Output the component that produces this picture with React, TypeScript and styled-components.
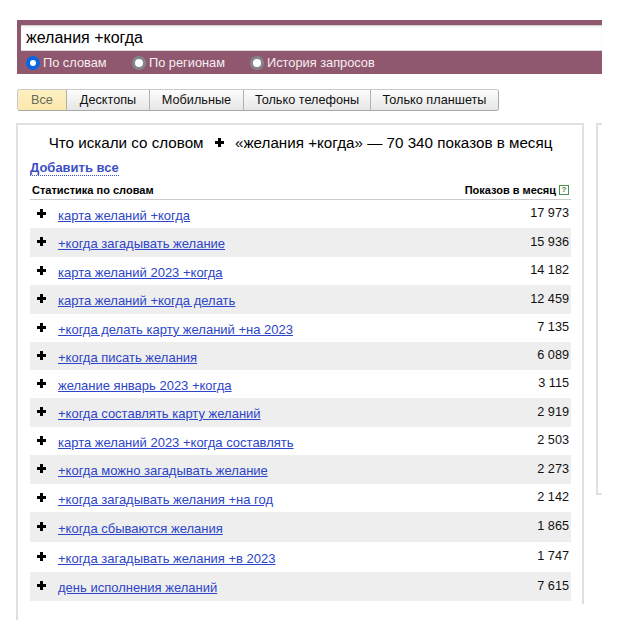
import React from "react";
import styled, { createGlobalStyle } from "styled-components";

const Global = createGlobalStyle`
  html, body { margin: 0; padding: 0; background: #fff; }
  body { font-family: "Liberation Sans", Arial, sans-serif; color: #000; overflow: hidden; }
`;
const Page = styled.div`
  width: 620px; height: 620px; overflow: hidden;
  padding: 20px 18px 0 17px; box-sizing: border-box;
`;
const SearchBand = styled.div`
  background: #90586e; padding-top: 5px; height: 54px; box-sizing: border-box;
`;
const SearchInput = styled.div`
  background: #fff; height: 26px; margin-left: 4px; padding-left: 5px; padding-top: 0;
  font-size: 16px; line-height: 25px;
  box-shadow: inset 0 2px 2px -1px #c4c4c4, inset 0 -1px 0 #d8d8d8;
`;
const RadioRow = styled.div`
  display: flex; height: 23px; align-items: center; padding-left: 9px;
  color: #f6eef1; font-size: 12.8px;
`;
const RadioItem = styled.label<{ $w: number }>`
  display: flex; align-items: center; gap: 3px; width: ${p => p.$w}px;
`;
const RadioDot = styled.span<{ $on?: boolean }>`
  width: 14px; height: 14px; border-radius: 50%; box-sizing: border-box; background: #fff;
  border: ${p => (p.$on ? "4px solid #0a66e0" : "3px solid #85858c")};
`;
const Tabs = styled.div`
  display: inline-flex; margin-top: 15px; height: 22px; box-sizing: border-box;
  border: 1px solid #c9c9c9; border-bottom-color: #a8a8a8; border-right-color: #a8a8a8; border-radius: 3px; overflow: hidden;
  vertical-align: top;
`;
const Tab = styled.div<{ $w: number; $on?: boolean }>`
  width: ${p => p.$w}px; box-sizing: border-box; text-align: center; font-size: 12.7px; line-height: 20px;
  color: ${p => (p.$on ? "#6a6a5a" : "#111")};
  background: ${p => (p.$on ? "linear-gradient(#fdf0c0, #fbe8ae)" : "linear-gradient(#fdfdfd, #e6e6e6)")};
  & + & { border-left: 1px solid #b0b0b0; }
`;
const Columns = styled.div`
  display: flex; margin-top: 12px; margin-left: -1px; align-items: flex-start; gap: 12px;
`;
const Panel = styled.div`
  width: 568px; height: 497px; flex: none; box-sizing: border-box;
  border-left: 2px solid #e0e0e0;
`;
const PanelBody = styled.div`
  height: 481px; box-sizing: border-box;
  border: solid #e0e0e0; border-width: 2px 2px 0 0; padding: 0 11px 0 12px;
`;
const SidePanel = styled.div`
  flex: 1; height: 372px; box-sizing: border-box;
  border: solid #e0e0e0; border-width: 2px 0 2px 2px;
`;
const Heading = styled.div`
  display: flex; justify-content: center; align-items: center; gap: 6px;
  font-size: 15.2px; height: 32px; padding-top: 3px; box-sizing: border-box; white-space: pre;
`;
const AddAll = styled.a`
  display: inline-block; font-size: 13px; font-weight: bold; color: #3d4fc4; line-height: 15px;
  border-bottom: 1px dotted #3d4fc4; margin-top: 3px;
`;
const TableHead = styled.div`
  display: flex; justify-content: space-between; align-items: flex-end; height: 24px; padding: 0 2px 3px;
  border-bottom: 1px solid #ccc; font-size: 11px; font-weight: bold; box-sizing: border-box;
`;
const HeadRight = styled.span`
  display: flex; align-items: center; gap: 3px;
`;
const Help = styled.span`
  width: 8px; height: 8px; flex: none; border: 1px solid #4d8f4d; color: #3f7f3f; font-size: 8px; line-height: 8px; text-align: center;
`;
const Row = styled.div<{ $h: number; $alt?: boolean }>`
  display: flex; height: ${p => p.$h}px; box-sizing: border-box; align-items: center;
  padding: 0 2px 0 6px; background: ${p => (p.$alt ? "#eeeeee" : "#fff")};
`;
const PlusBox = styled.span`
  display: inline-flex; width: 12px; height: 13px; flex: none; margin-top: 0;
`;
const Phrase = styled.a`
  margin-left: 10px; font-size: 13px; color: #2d45c8; text-decoration: underline; flex: 1; padding-top: 2px;
`;
const Count = styled.span`
  font-size: 12.7px; margin-top: -2px; color: #111;
`;

const Plus = ({ size = 11 }: { size?: number }) => (
  <svg width={size} height={size} viewBox="0 0 11 11" aria-hidden>
    <path d="M4 1h3v3h3v3H7v3H4V7H1V4h3z" fill="#000" />
  </svg>
);

const rows: [string, string, number][] = [
  ["карта желаний +когда", "17 973", 28],
  ["+когда загадывать желание", "15 936", 29],
  ["карта желаний 2023 +когда", "14 182", 28],
  ["карта желаний +когда делать", "12 459", 29],
  ["+когда делать карту желаний +на 2023", "7 135", 28],
  ["+когда писать желания", "6 089", 28],
  ["желание январь 2023 +когда", "3 115", 28],
  ["+когда составлять карту желаний", "2 919", 29],
  ["карта желаний 2023 +когда составлять", "2 503", 28],
  ["+когда можно загадывать желание", "2 273", 29],
  ["+когда загадывать желания +на год", "2 142", 28],
  ["+когда сбываются желания", "1 865", 30],
  ["+когда загадывать желания +в 2023", "1 747", 30],
  ["день исполнения желаний", "7 615", 29],
];

export default function App() {
  return (
    <Page>
      <Global />
      <SearchBand>
        <SearchInput>желания +когда</SearchInput>
        <RadioRow>
          <RadioItem $w={106}><RadioDot $on />По словам</RadioItem>
          <RadioItem $w={118}><RadioDot />По регионам</RadioItem>
          <RadioItem $w={200}><RadioDot />История запросов</RadioItem>
        </RadioRow>
      </SearchBand>
      <Tabs>
        <Tab $w={48} $on>Все</Tab>
        <Tab $w={83}>Десктопы</Tab>
        <Tab $w={94}>Мобильные</Tab>
        <Tab $w={127}>Только телефоны</Tab>
        <Tab $w={128}>Только планшеты</Tab>
      </Tabs>
      <Columns>
        <Panel>
          <PanelBody>
            <Heading>Что искали со словом <Plus /> «желания +когда» — 70 340 показов в месяц</Heading>
            <AddAll>Добавить все</AddAll>
            <TableHead>
              <span>Статистика по словам</span>
              <HeadRight>Показов в месяц<Help>?</Help></HeadRight>
            </TableHead>
            {rows.map(([phrase, count, h], i) => (
              <Row key={phrase} $h={h} $alt={i % 2 === 1}>
                <PlusBox><Plus /></PlusBox>
                <Phrase>{phrase}</Phrase>
                <Count>{count}</Count>
              </Row>
            ))}
          </PanelBody>
        </Panel>
        <SidePanel />
      </Columns>
    </Page>
  );
}
